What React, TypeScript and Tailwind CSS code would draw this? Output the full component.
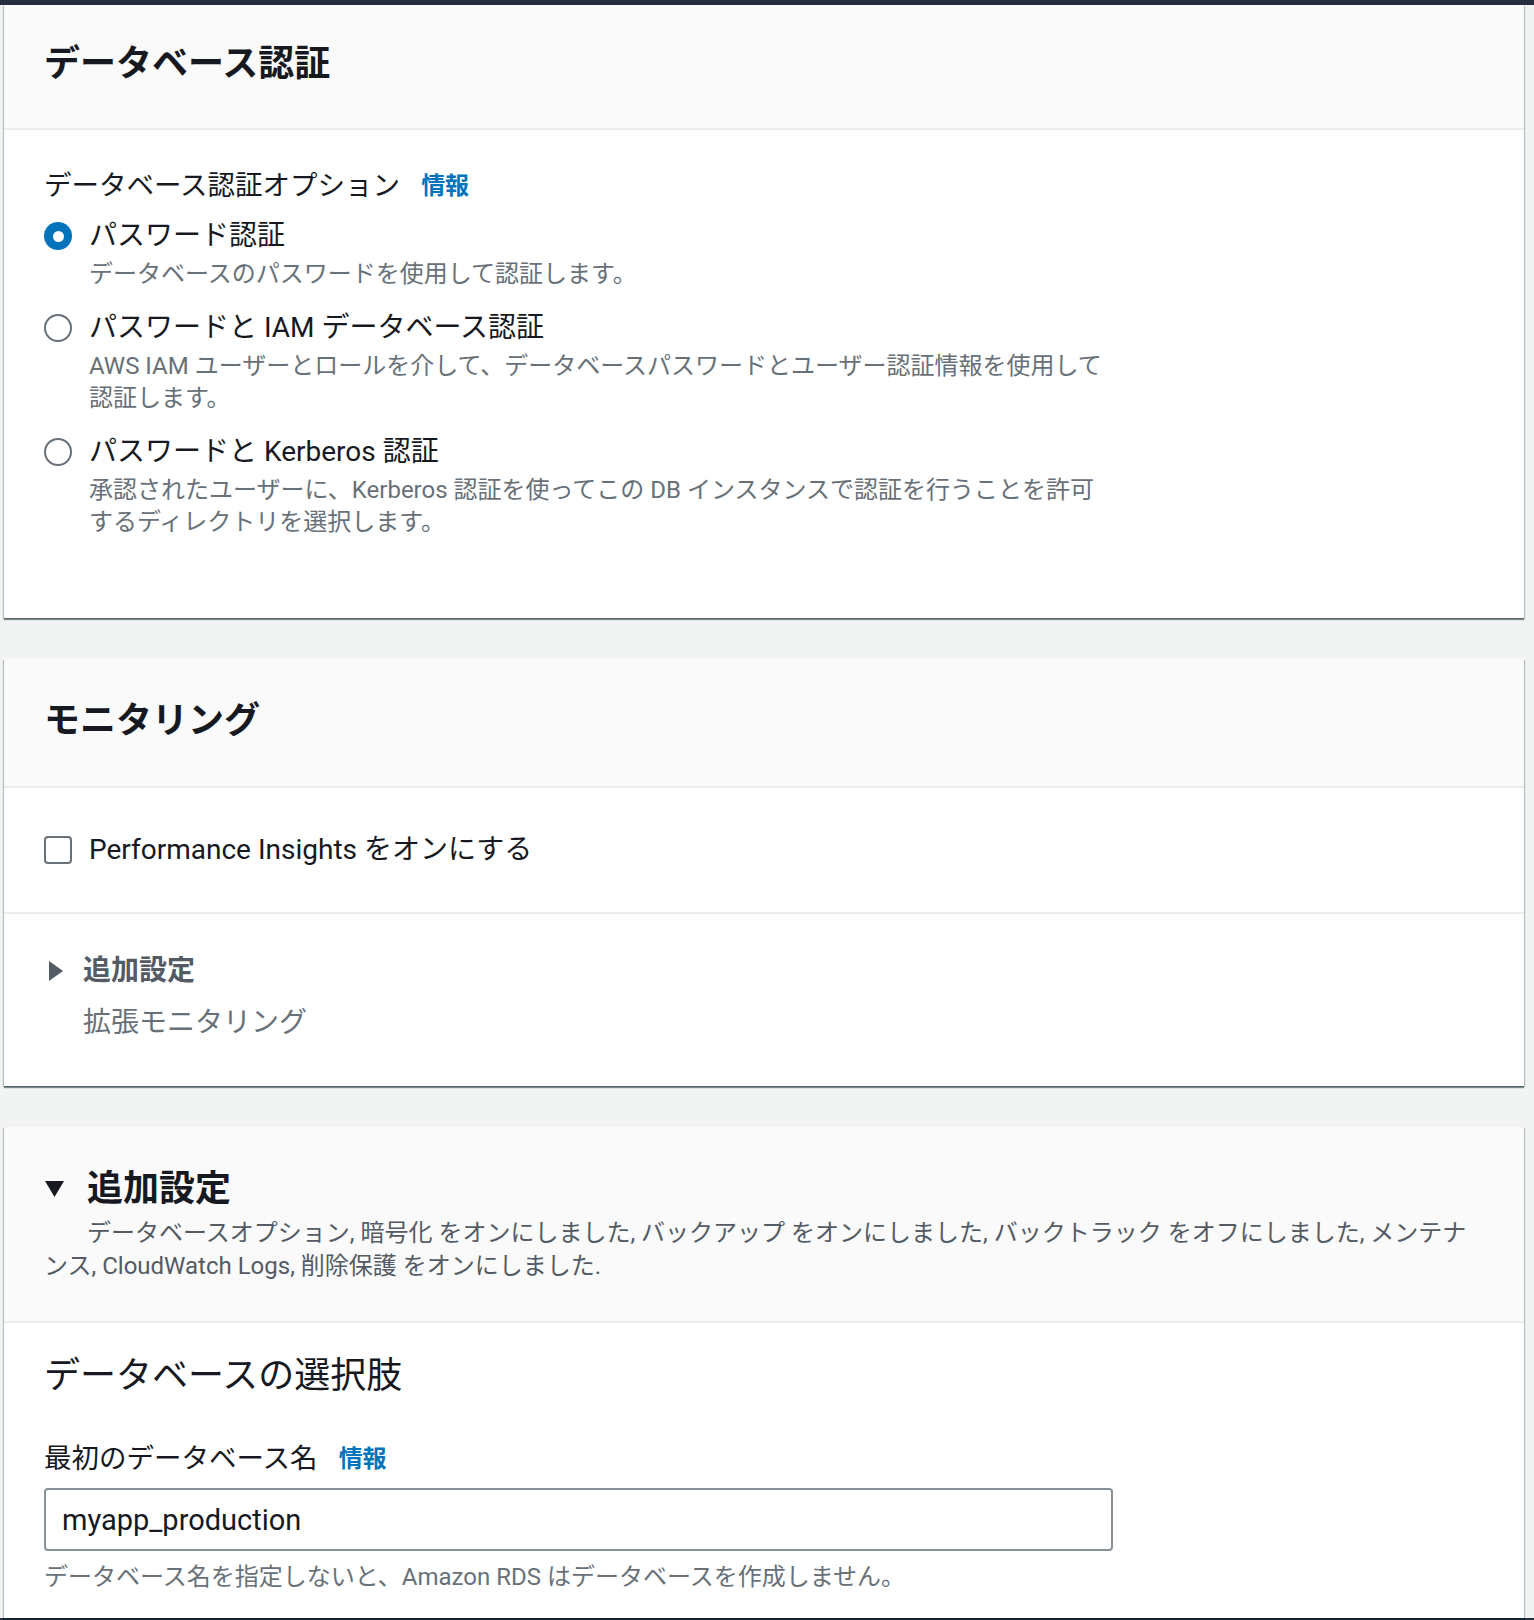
const cardShadow =
  "bg-white shadow-[0_2px_1px_0_rgba(0,28,36,0.45),1px_1px_1px_0_rgba(0,28,36,0.2),-1px_1px_1px_0_rgba(0,28,36,0.2)]";

const Radio = ({ checked }: { checked?: boolean }) =>
  checked ? (
    <span className="mt-[4px] flex h-[28px] w-[28px] shrink-0 items-center justify-center rounded-full bg-[#0073bb]">
      <span className="h-[11px] w-[11px] rounded-full bg-white" />
    </span>
  ) : (
    <span className="mt-[4px] h-[28px] w-[28px] shrink-0 rounded-full border-2 border-[#687078] bg-white" />
  );

const AuthOption = ({
  checked,
  label,
  children,
}: {
  checked?: boolean;
  label: React.ReactNode;
  children: React.ReactNode;
}) => (
  <div>
    <label className="flex items-start gap-[17px]">
      <Radio checked={checked} />
      <span className="text-[28px] leading-[36px] text-[#16191f]">{label}</span>
    </label>
    <p className="ml-[45px] mt-[4px] whitespace-nowrap text-[24px] leading-[32px] text-[#687078]">{children}</p>
  </div>
);

const InfoLink = ({ className = "" }: { className?: string }) => (
  <a href="#" className={`text-[24px] font-bold text-[#0073bb] ${className}`}>
    情報
  </a>
);

export default function App() {
  return (
    <div className="min-h-screen bg-[#f2f3f3] [font-family:Roboto,'Noto_Sans_CJK_JP',sans-serif]">
      <div className="h-[5px] bg-[#232f3e]" />

      <div className="ml-[4px] mr-[10px] flex flex-col gap-[41px]">
        {/* データベース認証 */}
        <section className={cardShadow}>
          <div className="h-[125px] border-b-2 border-[#eaeded] bg-[#fafafa] px-[40px] pt-[37px]">
            <h2 className="text-[36px] font-bold leading-[44px] text-[#16191f]">データベース認証</h2>
          </div>
          <div className="px-[40px] pb-[80px] pt-[38px]">
            <div className="flex items-center text-[27.5px] leading-[36px] text-[#16191f]">
              データベース認証オプション
              <InfoLink className="ml-[21px]" />
            </div>
            <div className="mt-[14px] flex flex-col gap-[20px]">
              <AuthOption checked label="パスワード認証">
                データベースのパスワードを使用して認証します。
              </AuthOption>
              <AuthOption label="パスワードと IAM データベース認証">
                AWS IAM ユーザーとロールを介して、データベースパスワードとユーザー認証情報を使用して
                <br />
                認証します。
              </AuthOption>
              <AuthOption label="パスワードと Kerberos 認証">
                承認されたユーザーに、Kerberos 認証を使ってこの DB インスタンスで認証を行うことを許可
                <br />
                するディレクトリを選択します。
              </AuthOption>
            </div>
          </div>
        </section>

        {/* モニタリング */}
        <section className={cardShadow}>
          <div className="h-[129px] border-b-2 border-[#eaeded] bg-[#fafafa] px-[40px] pt-[40px]">
            <h2 className="text-[36px] font-bold leading-[44px] text-[#16191f]">モニタリング</h2>
          </div>
          <div className="flex h-[126px] items-center border-b-2 border-[#eaeded] px-[40px]">
            <label className="flex items-center gap-[17px]">
              <span className="h-[28px] w-[28px] rounded-[4px] border-2 border-[#687078] bg-white" />
              <span className="text-[28px] leading-[36px] text-[#16191f]">
                Performance Insights をオンにする
              </span>
            </label>
          </div>
          <div className="px-[40px] pb-[45px] pt-[39px]">
            <div className="flex items-center">
              <svg width="16" height="22" viewBox="0 0 16 22" className="ml-[4px] mr-[19px]">
                <path d="M1 1 L15 11 L1 21 Z" fill="#545b64" />
              </svg>
              <span className="text-[28px] font-bold leading-[36px] text-[#545b64]">追加設定</span>
            </div>
            <p className="ml-[39px] mt-[16px] text-[28px] leading-[36px] text-[#687078]">拡張モニタリング</p>
          </div>
        </section>

        {/* 追加設定 */}
        <section className={cardShadow}>
          <div className="border-b-2 border-[#eaeded] bg-[#fafafa] px-[40px] pb-[38px] pt-[40px]">
            <div className="flex items-center">
              <svg width="21" height="18" viewBox="0 0 21 18" className="mr-[22px]">
                <path d="M1 1 L20 1 L10.5 17 Z" fill="#16191f" />
              </svg>
              <h2 className="text-[36px] font-bold leading-[44px] text-[#16191f]">追加設定</h2>
            </div>
            <p className="mt-[6px] whitespace-nowrap indent-[43px] text-[24px] leading-[33px] text-[#545b64]">
              データベースオプション, 暗号化 をオンにしました, バックアップ をオンにしました, バックトラック をオフにしました, メンテナ
              <br />
              ンス, CloudWatch Logs, 削除保護 をオンにしました.
            </p>
          </div>
          <div className="px-[40px] pb-[25px] pt-[31px]">
            <h3 className="text-[36px] leading-[44px] text-[#16191f]">データベースの選択肢</h3>
            <div className="mt-[43px] flex items-center text-[27.5px] leading-[36px] text-[#16191f]">
              最初のデータベース名
              <InfoLink className="ml-[21px]" />
            </div>
            <input
              defaultValue="myapp_production"
              className="mt-[11px] block h-[63px] w-[1069px] rounded-[4px] border-2 border-[#879196] bg-white px-[16px] text-[29px] text-[#16191f] outline-none"
            />
            <p className="mt-[10px] text-[24px] leading-[32px] text-[#687078]">
              データベース名を指定しないと、Amazon RDS はデータベースを作成しません。
            </p>
          </div>
        </section>
      </div>
      <div className="h-[4px] bg-[#232f3e]" />
    </div>
  );
}
